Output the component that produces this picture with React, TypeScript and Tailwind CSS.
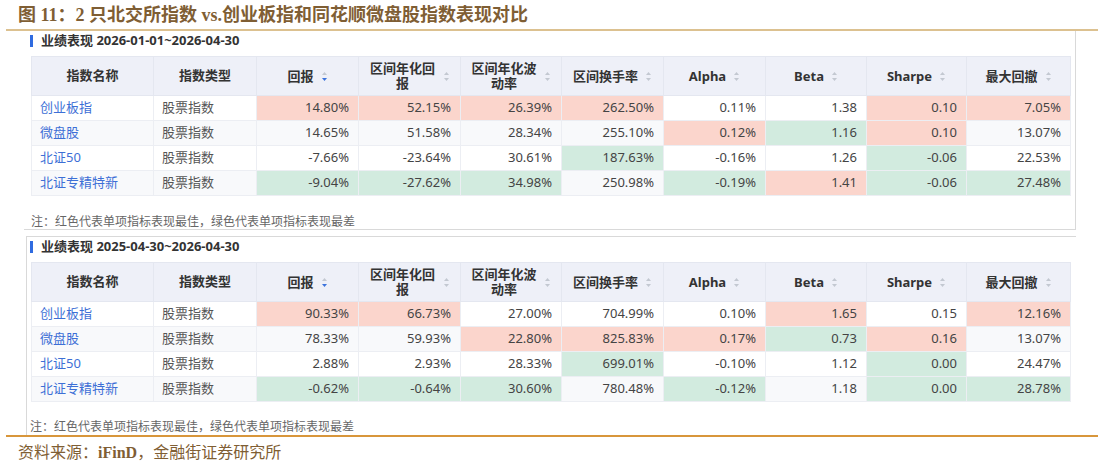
import React from 'react';

type Tone = 'p' | 'g' | '';
type Row = { name: string; vals: [string, Tone][] };

const widths = [122, 103, 102, 102, 101, 102, 102, 101, 100, 104];

const headers = ['回报', '区间年化回报', '区间年化波动率', '区间换手率', 'Alpha', 'Beta', 'Sharpe', '最大回撤'];

const table1: Row[] = [
  { name: '创业板指', vals: [['14.80%', 'p'], ['52.15%', 'p'], ['26.39%', 'p'], ['262.50%', 'p'], ['0.11%', ''], ['1.38', ''], ['0.10', 'p'], ['7.05%', 'p']] },
  { name: '微盘股', vals: [['14.65%', ''], ['51.58%', ''], ['28.34%', ''], ['255.10%', ''], ['0.12%', 'p'], ['1.16', 'g'], ['0.10', 'p'], ['13.07%', '']] },
  { name: '北证50', vals: [['-7.66%', ''], ['-23.64%', ''], ['30.61%', ''], ['187.63%', 'g'], ['-0.16%', ''], ['1.26', ''], ['-0.06', 'g'], ['22.53%', '']] },
  { name: '北证专精特新', vals: [['-9.04%', 'g'], ['-27.62%', 'g'], ['34.98%', 'g'], ['250.98%', ''], ['-0.19%', 'g'], ['1.41', 'p'], ['-0.06', 'g'], ['27.48%', 'g']] },
];

const table2: Row[] = [
  { name: '创业板指', vals: [['90.33%', 'p'], ['66.73%', 'p'], ['27.00%', ''], ['704.99%', ''], ['0.10%', ''], ['1.65', 'p'], ['0.15', ''], ['12.16%', 'p']] },
  { name: '微盘股', vals: [['78.33%', ''], ['59.93%', ''], ['22.80%', 'p'], ['825.83%', 'p'], ['0.17%', 'p'], ['0.73', 'g'], ['0.16', 'p'], ['13.07%', '']] },
  { name: '北证50', vals: [['2.88%', ''], ['2.93%', ''], ['28.33%', ''], ['699.01%', 'g'], ['-0.10%', ''], ['1.12', ''], ['0.00', 'g'], ['24.47%', '']] },
  { name: '北证专精特新', vals: [['-0.62%', 'g'], ['-0.64%', 'g'], ['30.60%', 'g'], ['780.48%', ''], ['-0.12%', 'g'], ['1.18', ''], ['0.00', 'g'], ['28.78%', 'g']] },
];

function SortIcon({ active }: { active?: boolean }) {
  return (
    <svg width="7" height="11" viewBox="0 0 7 11" className="shrink-0">
      <path d="M3.5 1 L6 4 L1 4 Z" fill="#c3c8d1" />
      <path d="M3.5 10 L6 7 L1 7 Z" fill={active ? '#3a72dd' : '#c3c8d1'} />
    </svg>
  );
}

function DataTable({ rows }: { rows: Row[] }) {
  return (
    <table className="table-fixed border-collapse w-[1039px] text-[13px]">
      <colgroup>
        {widths.map((w, i) => (
          <col key={i} style={{ width: w }} />
        ))}
      </colgroup>
      <thead>
        <tr className="bg-[#eef0f8] h-[39px] text-[#333] font-bold">
          <th className="border border-[#e4e7f0] font-bold">指数名称</th>
          <th className="border border-[#e4e7f0] font-bold">指数类型</th>
          {headers.map((h, i) => (
            <th key={h} className="border border-[#e4e7f0] px-[10px] font-bold">
              <div className="flex items-center justify-center gap-[7px]">
                <span className="text-center leading-[15px]">{h}</span>
                <SortIcon active={i === 0} />
              </div>
            </th>
          ))}
        </tr>
      </thead>
      <tbody>
        {rows.map((r, ri) => {
          const stripe = ri % 2 === 1 ? 'bg-[#f8f9fb]' : 'bg-white';
          return (
            <tr key={r.name} className="h-[25px]">
              <td className={`border border-[#eceef3] pl-[8px] text-[#3d6fd6] ${stripe}`}>{r.name}</td>
              <td className={`border border-[#eceef3] pl-[8px] text-[#555] ${stripe}`}>股票指数</td>
              {r.vals.map(([v, t], ci) => (
                <td
                  key={ci}
                  className={`border border-[#eceef3] pr-[9px] text-right text-[#444] ${
                    t === 'p' ? 'bg-[#fbd5cc]' : t === 'g' ? 'bg-[#d2ebdf]' : stripe
                  }`}
                >
                  {v}
                </td>
              ))}
            </tr>
          );
        })}
      </tbody>
    </table>
  );
}

function Heading({ text }: { text: string }) {
  return (
    <div className="flex items-center h-[20px] gap-[8px]">
      <div className="w-[3px] h-[12px] bg-[#2f6be0]" />
      <span className="text-[13px] font-bold text-[#333]">{text}</span>
    </div>
  );
}

export default function App() {
  return (
    <div
      className="w-[1098px] h-[467px] bg-white overflow-hidden"
      style={{ fontFamily: '"Noto Sans", "Noto Sans CJK SC", sans-serif' }}
    >
      {/* Title */}
      <div
        className="h-[29px] pl-[18px] pt-[3px] text-[18px] font-bold text-[#7f5e34] leading-[24px]"
        style={{ fontFamily: '"Liberation Serif", "Noto Sans CJK SC", serif' }}
      >
        图 11：2 只北交所指数 vs.创业板指和同花顺微盘股指数表现对比
      </div>
      <div className="ml-[6px] h-[2px] bg-[#dcc190]" />

      {/* Section 1 */}
      <div className="ml-[24px] w-[1052px] h-[199px] border-r border-b border-[#d9d9d9] pl-[6px]">
        <Heading text="业绩表现 2026-01-01~2026-04-30" />
        <div className="mt-[5px] ml-[1px]">
          <DataTable rows={table1} />
        </div>
        <div className="mt-[18px] ml-[1px] text-[12px] leading-[16px] text-[#666]">
          注：红色代表单项指标表现最佳，绿色代表单项指标表现最差
        </div>
      </div>

      {/* Section 2 */}
      <div className="mt-[6px] ml-[26px] w-[1050px] h-[199px] border-t border-l border-[#d9d9d9] pl-[3px]">
        <Heading text="业绩表现 2025-04-30~2026-04-30" />
        <div className="mt-[5px] ml-[1px]">
          <DataTable rows={table2} />
        </div>
        <div className="mt-[17px] text-[12px] leading-[16px] text-[#666]">
          注：红色代表单项指标表现最佳，绿色代表单项指标表现最差
        </div>
      </div>

      <div className="ml-[6px] h-[2px] bg-[#d8963b]" />
      <div
        className="pl-[18px] pt-[6px] text-[16px] text-[#7f5e34] leading-[20px]"
        style={{ fontFamily: '"Liberation Serif", "Noto Sans CJK SC", serif' }}
      >
        资料来源：<span className="font-bold">iFinD</span>，金融街证券研究所
      </div>
    </div>
  );
}
